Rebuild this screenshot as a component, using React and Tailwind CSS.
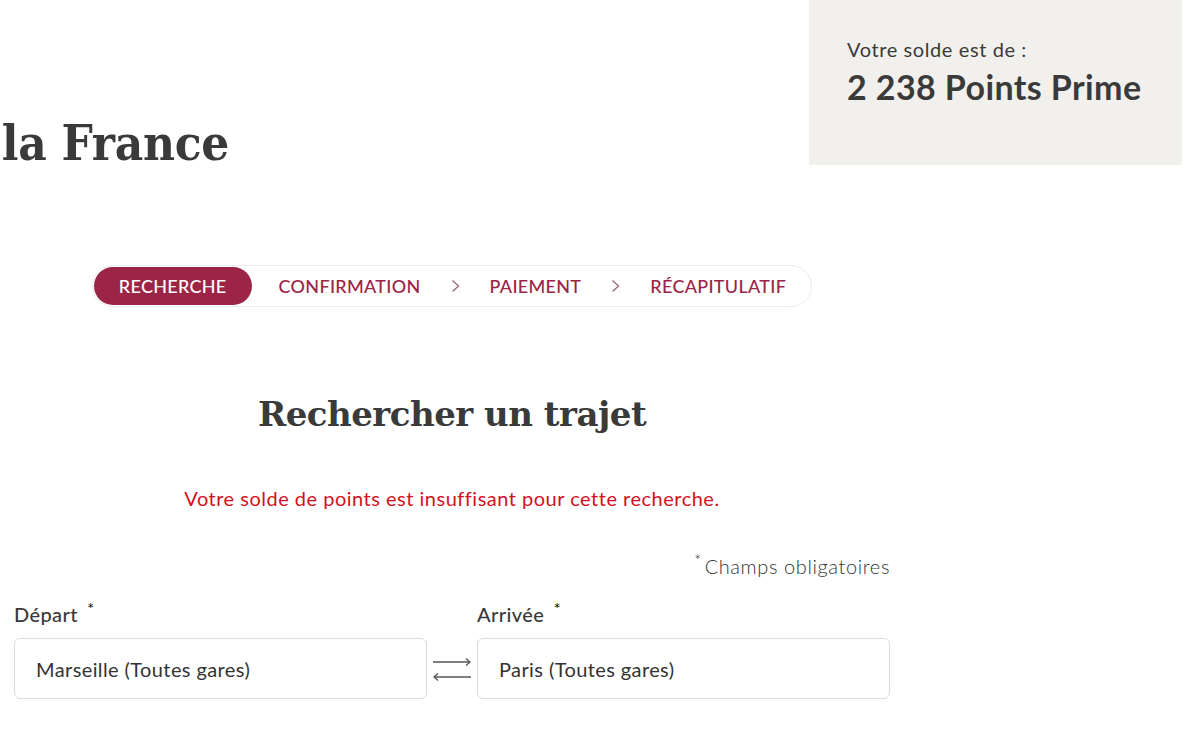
const steps = ["CONFIRMATION", "PAIEMENT", "RÉCAPITULATIF"];

function Chevron() {
  return (
    <svg width="9" height="14" viewBox="0 0 9 14" className="mx-[30px] shrink-0">
      <polyline points="1.5,1.5 7.5,7 1.5,12.5" fill="none" stroke="#9a6275" strokeWidth="1.2" />
    </svg>
  );
}

function SwapIcon() {
  return (
    <svg width="42" height="28" viewBox="0 0 42 28" className="shrink-0">
      <g fill="none" stroke="#555" strokeWidth="1.3">
        <line x1="2" y1="7" x2="39" y2="7" />
        <polyline points="35,3.5 39,7 35,10.5" />
        <line x1="3" y1="22" x2="40" y2="22" />
        <polyline points="7,18.5 3,22 7,25.5" />
      </g>
    </svg>
  );
}

function Field({ label, value }) {
  return (
    <div className="flex-1">
      <label className="block text-[20px] tracking-[0.4px] font-medium text-[#3a3a3a] mb-[12px] leading-6">
        {label} <sup className="text-[16px] ml-[4px] text-[#222]">*</sup>
      </label>
      <div className="h-[61px] border border-[#dcdcdc] rounded-[6px] flex items-center px-[21px] text-[20px] tracking-[0.4px] text-[#333]">
        {value}
      </div>
    </div>
  );
}

export default function App() {
  return (
    <div className="min-h-screen bg-white text-[#3a3a3a] font-['Lato','Noto_Sans',sans-serif] overflow-hidden">
      {/* top band: hero title + balance */}
      <div className="flex">
        <div className="flex-1">
          <div className="w-[229px] flex justify-end pt-[112px]">
            <h1 className="whitespace-nowrap font-['DejaVu_Serif',serif] font-stretch-condensed font-bold text-[49px] leading-[63px] text-[#3a3a3a] tracking-[-0.3px]">
              la France
            </h1>
          </div>
        </div>
        <aside className="w-[373px] h-[165px] bg-[#f2f0ec] mr-[18px] pl-[38px] pt-[37px]">
          <p className="text-[20px] tracking-[0.6px] leading-6">Votre solde est de :</p>
          <p className="text-[34px] tracking-[0.4px] font-bold leading-10 mt-[6px]">2 238 Points Prime</p>
        </aside>
      </div>

      <div className="ml-[14px] w-[876px]">
        {/* stepper */}
        <div className="mt-[90px] mx-auto w-fit flex items-center border border-[#ececec] rounded-full p-[1px] pr-[25px]">
          <span className="h-[38px] px-[25px] flex items-center rounded-full bg-[#9c2446] text-white text-[18px] tracking-[0.3px] font-medium">
            RECHERCHE
          </span>
          <span className="ml-[27px] text-[18px] tracking-[0.3px] font-medium text-[#9c2446]">{steps[0]}</span>
          <Chevron />
          <span className="text-[18px] tracking-[0.3px] font-medium text-[#9c2446]">{steps[1]}</span>
          <Chevron />
          <span className="text-[18px] tracking-[0.3px] font-medium text-[#9c2446]">{steps[2]}</span>
        </div>

        <h2 className="mt-[85px] text-center font-['DejaVu_Serif',serif] font-bold text-[34px] leading-[44px] tracking-[-0.5px] text-[#3a3a3a]">
          Rechercher un trajet
        </h2>

        <p className="mt-[47px] text-center text-[20px] tracking-[0.5px] text-[#d4101e]">
          Votre solde de points est insuffisant pour cette recherche.
        </p>

        <p className="mt-[38px] text-right text-[20px] tracking-[0.6px] font-light text-[#333]">
          <sup className="text-[16px] mr-[3px] text-[#222]">*</sup>Champs obligatoires
        </p>

        <div className="mt-[21px] flex items-end">
          <Field label="Départ" value="Marseille (Toutes gares)" />
          <div className="w-[50px] h-[61px] flex items-center justify-center">
            <SwapIcon />
          </div>
          <Field label="Arrivée" value="Paris (Toutes gares)" />
        </div>
      </div>
    </div>
  );
}
